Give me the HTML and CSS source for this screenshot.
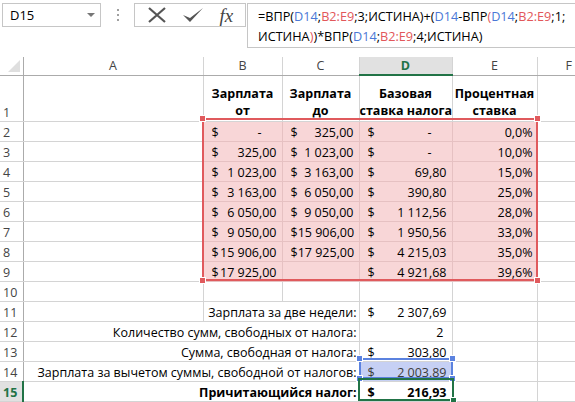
FILE: index.html
```html
<!DOCTYPE html>
<html lang="ru">
<head>
    <meta charset="UTF-8">
    <title>Налог</title>
    <link rel="stylesheet" href="styles.css">
</head>
<body>
    <div class="toolbar">
        <div class="name-box">
            <span>D15</span>
            <span class="drop"></span>
        </div>
        <div class="dots"><i></i><i></i><i></i></div>
        <div class="fx-buttons">
            <svg width="20" height="16" viewBox="0 0 20 16"><path d="M2 1 L18 15 M18 1 L2 15" stroke="#555" stroke-width="2.2" fill="none"/></svg>
            <svg width="22" height="16" viewBox="0 0 22 16"><path d="M1 8 L8 15 L21 1 L8 11 Z" fill="#555"/></svg>
            <span class="fx">fx</span>
        </div>
        <div class="formula">
            =ВПР(<b class="ref-b">D14</b>;<b class="ref-r">B2:E9</b>;3;ИСТИНА)+(<b class="ref-b">D14</b>-ВПР<b class="ref-r">(</b><b class="ref-b">D14</b>;<b class="ref-r">B2:E9</b>;1;<br>
            ИСТИНА<b class="ref-r">)</b>)*ВПР(<b class="ref-b">D14</b>;<b class="ref-r">B2:E9</b>;4;ИСТИНА)
        </div>
    </div>

    <div class="sheet">
        <table class="grid">
            <colgroup>
                <col style="width:23px">
                <col style="width:180px">
                <col style="width:79px">
                <col style="width:77px">
                <col style="width:93px">
                <col style="width:85px">
                <col>
            </colgroup>
            <tr class="col-heads">
                <th class="corner"></th>
                <th>A</th><th>B</th><th>C</th><th class="active">D</th><th>E</th><th>F</th>
            </tr>
            <tr class="tall">
                <th class="rh">1</th>
                <td></td>
                <td class="head">Зарплата<br>от</td>
                <td class="head">Зарплата<br>до</td>
                <td class="head">Базовая<br>ставка налога</td>
                <td class="head">Процентная<br>ставка</td>
                <td></td>
            </tr>
            <tr>
                <th class="rh">2</th><td></td>
                <td class="acc hl"><span class="cur">$</span><span class="dash">-</span></td>
                <td class="acc hl"><span class="cur">$</span>325,00</td>
                <td class="acc hl"><span class="cur">$</span><span class="dash">-</span></td>
                <td class="pct hl">0,0%</td><td></td>
            </tr>
            <tr>
                <th class="rh">3</th><td></td>
                <td class="acc hl"><span class="cur">$</span>325,00</td>
                <td class="acc hl"><span class="cur">$</span>1 023,00</td>
                <td class="acc hl"><span class="cur">$</span><span class="dash">-</span></td>
                <td class="pct hl">10,0%</td><td></td>
            </tr>
            <tr>
                <th class="rh">4</th><td></td>
                <td class="acc hl"><span class="cur">$</span>1 023,00</td>
                <td class="acc hl"><span class="cur">$</span>3 163,00</td>
                <td class="acc hl"><span class="cur">$</span>69,80</td>
                <td class="pct hl">15,0%</td><td></td>
            </tr>
            <tr>
                <th class="rh">5</th><td></td>
                <td class="acc hl"><span class="cur">$</span>3 163,00</td>
                <td class="acc hl"><span class="cur">$</span>6 050,00</td>
                <td class="acc hl"><span class="cur">$</span>390,80</td>
                <td class="pct hl">25,0%</td><td></td>
            </tr>
            <tr>
                <th class="rh">6</th><td></td>
                <td class="acc hl"><span class="cur">$</span>6 050,00</td>
                <td class="acc hl"><span class="cur">$</span>9 050,00</td>
                <td class="acc hl"><span class="cur">$</span>1 112,56</td>
                <td class="pct hl">28,0%</td><td></td>
            </tr>
            <tr>
                <th class="rh">7</th><td></td>
                <td class="acc hl"><span class="cur">$</span>9 050,00</td>
                <td class="acc hl"><span class="cur">$</span>15 906,00</td>
                <td class="acc hl"><span class="cur">$</span>1 950,56</td>
                <td class="pct hl">33,0%</td><td></td>
            </tr>
            <tr>
                <th class="rh">8</th><td></td>
                <td class="acc hl"><span class="cur">$</span>15 906,00</td>
                <td class="acc hl"><span class="cur">$</span>17 925,00</td>
                <td class="acc hl"><span class="cur">$</span>4 215,03</td>
                <td class="pct hl">35,0%</td><td></td>
            </tr>
            <tr>
                <th class="rh">9</th><td></td>
                <td class="acc hl"><span class="cur">$</span>17 925,00</td>
                <td class="acc hl"></td>
                <td class="acc hl"><span class="cur">$</span>4 921,68</td>
                <td class="pct hl">39,6%</td><td></td>
            </tr>
            <tr>
                <th class="rh">10</th><td></td><td></td><td></td><td></td><td></td><td></td>
            </tr>
            <tr>
                <th class="rh">11</th><td></td>
                <td class="label" colspan="2">Зарплата за две недели:</td>
                <td class="acc"><span class="cur">$</span>2 307,69</td>
                <td></td><td></td>
            </tr>
            <tr>
                <th class="rh">12</th>
                <td class="label" colspan="3">Количество сумм, свободных от налога:</td>
                <td class="num">2</td>
                <td></td><td></td>
            </tr>
            <tr>
                <th class="rh">13</th>
                <td class="label" colspan="3">Сумма, свободная от налога:</td>
                <td class="acc"><span class="cur">$</span>303,80</td>
                <td></td><td></td>
            </tr>
            <tr>
                <th class="rh">14</th>
                <td class="label" colspan="3">Зарплата за вычетом суммы, свободной от налогов:</td>
                <td class="acc ref"><span class="cur">$</span>2 003,89</td>
                <td></td><td></td>
            </tr>
            <tr>
                <th class="rh active">15</th>
                <td class="label bold" colspan="3">Причитающийся налог:</td>
                <td class="acc bold"><span class="cur">$</span>216,93</td>
                <td></td><td></td>
            </tr>
        </table>

        <!-- selection overlays -->
        <div class="range range-red">
            <i class="knob tl"></i><i class="knob tr"></i><i class="knob bl"></i><i class="knob br"></i>
        </div>
        <div class="range range-blue">
            <i class="knob tl"></i><i class="knob tr"></i><i class="knob bl"></i><i class="knob br"></i>
        </div>
        <div class="range range-green">
            <i class="knob br"></i>
        </div>
    </div>
</body>
</html>
```

FILE: styles.css
```css
body {
    margin: 0;
    background: #fff;
    font-family: "Open Sans", "Noto Sans", sans-serif;
    font-size: 12.5px;
    color: #000;
    overflow: hidden;
}
.toolbar {
    display: flex;
    align-items: flex-start;
    height: 57px;
    padding: 3px 0 0 2px;
    box-sizing: border-box;
}
.name-box {
    width: 99px;
    height: 24px;
    border: 1px solid #c6c6c6;
    box-sizing: border-box;
    display: flex;
    align-items: center;
    justify-content: space-between;
    padding: 0 5px 0 7px;
    font-size: 13px;
}
.drop {
    width: 0;
    height: 0;
    border-left: 4px solid transparent;
    border-right: 4px solid transparent;
    border-top: 4px solid #777;
}
.dots {
    width: 33px;
    height: 24px;
    display: flex;
    flex-direction: column;
    align-items: center;
    justify-content: center;
    gap: 3px;
}
.dots i {
    width: 2px;
    height: 2px;
    background: #a0a0a0;
}
.fx-buttons {
    width: 112px;
    height: 24px;
    border: 1px solid #c6c6c6;
    box-sizing: border-box;
    display: flex;
    align-items: center;
    justify-content: space-around;
    padding: 0 4px;
}
.fx {
    font-family: "Liberation Serif", serif;
    font-style: italic;
    font-size: 19px;
    color: #444;
    line-height: 1;
}
.formula {
    flex: 1;
    height: 45px;
    margin-left: 1px;
    border: 1px solid #c6c6c6;
    border-right: none;
    box-sizing: border-box;
    padding: 2px 0 0 10px;
    line-height: 20px;
    font-size: 12.7px;
    white-space: nowrap;
    overflow: hidden;
}
.formula b {
    font-weight: normal;
}
.ref-b {
    color: #4a78d6;
}
.ref-r {
    color: #e2575a;
}

.sheet {
    position: relative;
    width: 575px;
    overflow: hidden;
}
.grid {
    border-collapse: collapse;
    table-layout: fixed;
    width: 601px;
}
.grid th,
.grid td {
    border: 1px solid #d4d4d4;
    padding: 0;
    height: 19px;
    line-height: 17px;
    vertical-align: bottom;
    white-space: nowrap;
    overflow: hidden;
}
.grid th:first-child {
    border-left: none;
}
.col-heads th {
    height: 17px;
    font-weight: normal;
    color: #444;
    text-align: center;
    vertical-align: middle;
    border-top: none;
    border-bottom: 1px solid #ababab;
}
.col-heads th.active {
    background: #e1e1e1;
    color: #217346;
    font-weight: bold;
    border-bottom: 2px solid #217346;
}
.corner {
    position: relative;
    border-right: 1px solid #ababab !important;
}
.corner::after {
    content: "";
    position: absolute;
    right: 3px;
    bottom: 3px;
    border-left: 12px solid transparent;
    border-bottom: 12px solid #dfdfdf;
}
.rh {
    font-weight: normal;
    color: #444;
    text-align: left;
    padding-left: 3px !important;
    border-right: 1px solid #ababab !important;
}
.rh.active {
    background: #e1e1e1;
    color: #217346;
    font-weight: bold;
    border-right: 2px solid #217346 !important;
}
.tall td,
.tall th {
    height: 43px;
}
.head {
    font-weight: bold;
    text-align: center;
    line-height: 20px;
    padding-bottom: 2px !important;
}
.hl {
    background: #f8d6d7;
    border-color: #e6c1c2 !important;
}
.acc {
    text-align: right;
    padding: 0 5px 0 8px !important;
}
.cur {
    float: left;
}
.dash {
    padding-right: 15px;
}
.pct {
    text-align: right;
    padding-right: 4px !important;
}
.num {
    text-align: right;
    padding-right: 8px !important;
}
.label {
    text-align: right;
    padding-right: 2px !important;
}
.bold {
    font-weight: bold;
}
.ref {
    background: #c6d0f4;
    color: #3c3c3c;
}

.range {
    position: absolute;
    box-sizing: border-box;
    pointer-events: none;
}
.range-red {
    left: 202px;
    top: 61px;
    width: 336px;
    height: 163px;
    border: 2px solid #e05a5d;
}
.range-blue {
    left: 359px;
    top: 301px;
    width: 94px;
    height: 21px;
    border: 2px solid #5b82df;
}
.range-green {
    left: 358px;
    top: 321px;
    width: 96px;
    height: 23px;
    border: 2px solid #217346;
}
.knob {
    position: absolute;
    width: 5px;
    height: 5px;
    border: 1px solid #fff;
}
.range-red .knob {
    background: #e05a5d;
}
.range-blue .knob {
    background: #5b82df;
}
.range-green .knob {
    background: #217346;
}
.knob.tl { left: -5px; top: -5px; }
.knob.tr { right: -5px; top: -5px; }
.knob.bl { left: -5px; bottom: -5px; }
.knob.br { right: -5px; bottom: -5px; }
```
